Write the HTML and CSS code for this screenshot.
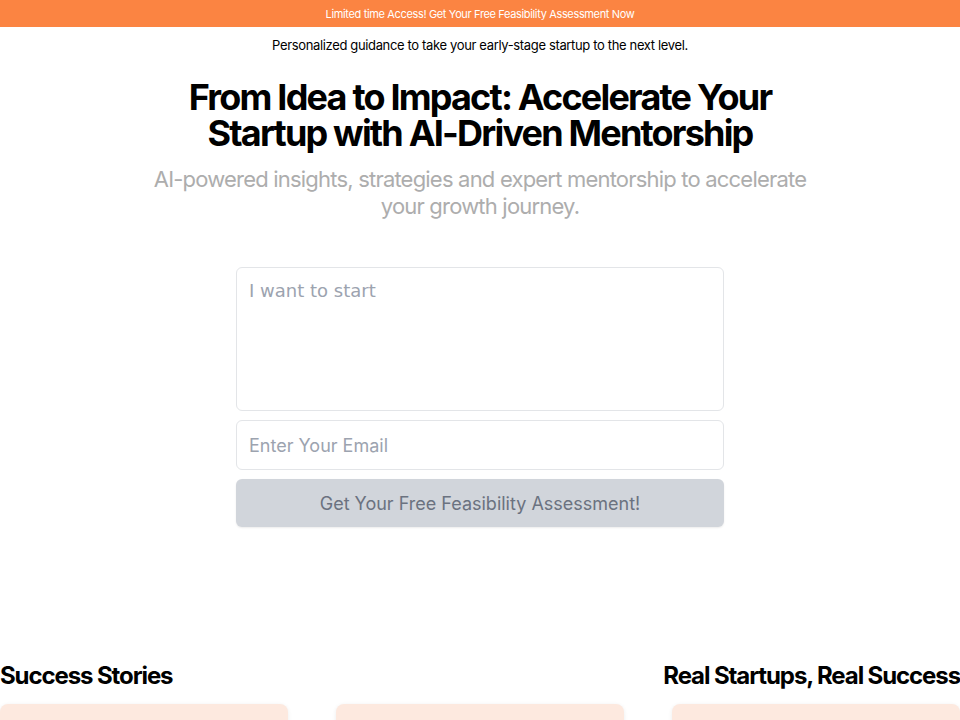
FILE: index.html
```html
<!DOCTYPE html>
<html lang="en">

<head>
    <meta charset="UTF-8">
    <meta name="viewport" content="width=device-width, initial-scale=1.0">
    <title>From Idea to Impact</title>
    <link rel="stylesheet" href="styles.css">
</head>

<body>
    <div class="topbanner">Limited time Access! Get Your Free Feasibility Assessment Now</div>
    <div class="maincontainer">
        <p class="tagline">Personalized guidance to take your early-stage startup to the next level.</p>
        <h1 class="headline">From Idea to Impact: Accelerate Your Startup with AI-Driven Mentorship</h1>
        <p class="subheadline">AI-powered insights, strategies and expert mentorship to accelerate your growth journey.</p>

        <form class="ideaform" onsubmit="return false">
            <textarea class="ideainput" placeholder="I want to start"></textarea>
            <input class="emailinput" type="email" placeholder="Enter Your Email">
            <button class="submitbutton" disabled>Get Your Free Feasibility Assessment!</button>
        </form>
    </div>

    <div class="storiessection">
        <div class="storiesheader">
            <h2>Success Stories</h2>
            <h2>Real Startups, Real Success</h2>
        </div>
        <div class="storiesrow">
            <div class="storycard"></div>
            <div class="storycard"></div>
            <div class="storycard"></div>
        </div>
    </div>
</body>

</html>
```

FILE: styles.css
```css
* {
    margin: 0;
    padding: 0;
    box-sizing: border-box;
}

body {
    font-family: "Inter", "Liberation Sans", sans-serif;
    color: #000;
    background-color: #fff;
}

.topbanner {
    height: 27px;
    background-color: #fb8442;
    color: #fff;
    font-size: 11px;
    letter-spacing: -0.35px;
    display: flex;
    justify-content: center;
    align-items: center;
}

.maincontainer {
    display: flex;
    flex-direction: column;
    align-items: center;
}

.tagline {
    margin-top: 10px;
    font-size: 13px;
    line-height: 16px;
    letter-spacing: -0.35px;
}

.headline {
    margin-top: 26px;
    width: 640px;
    text-align: center;
    font-size: 36px;
    line-height: 36px;
    font-weight: 700;
    letter-spacing: -1.8px;
}

.subheadline {
    margin-top: 15px;
    width: 680px;
    text-align: center;
    font-size: 22px;
    line-height: 27px;
    color: #adadad;
    letter-spacing: -0.8px;
}

.ideaform {
    margin-top: 47px;
    width: 488px;
    display: flex;
    flex-direction: column;
    gap: 9px;
}

.ideainput,
.emailinput {
    width: 100%;
    border: 1px solid #e3e5e8;
    border-radius: 6px;
    padding: 12px;
    font-size: 18px;
    color: #333;
    outline: none;
}

.ideainput {
    height: 144px;
    resize: none;
    font-family: "DejaVu Sans", sans-serif;
}

.emailinput {
    height: 50px;
    font-family: "Inter", sans-serif;
}

.ideainput::placeholder,
.emailinput::placeholder {
    color: #9ca3af;
}

.submitbutton {
    height: 48px;
    border: none;
    border-radius: 6px;
    background-color: #d1d5db;
    color: #6b7280;
    font-family: "Inter", sans-serif;
    font-size: 18px;
    box-shadow: 0 1px 2px rgba(0, 0, 0, 0.08);
}

.storiessection {
    margin-top: 134px;
}

.storiesheader {
    display: flex;
    justify-content: space-between;
    align-items: center;
}

.storiesheader h2 {
    font-size: 24px;
    line-height: 30px;
    font-weight: 700;
    letter-spacing: -1.1px;
}

.storiesrow {
    margin-top: 13px;
    display: flex;
    gap: 48px;
}

.storycard {
    width: 288px;
    height: 200px;
    flex-shrink: 0;
    border-radius: 8px;
    background-color: #fde9df;
    box-shadow: 0 1px 4px rgba(0, 0, 0, 0.08);
}
```
